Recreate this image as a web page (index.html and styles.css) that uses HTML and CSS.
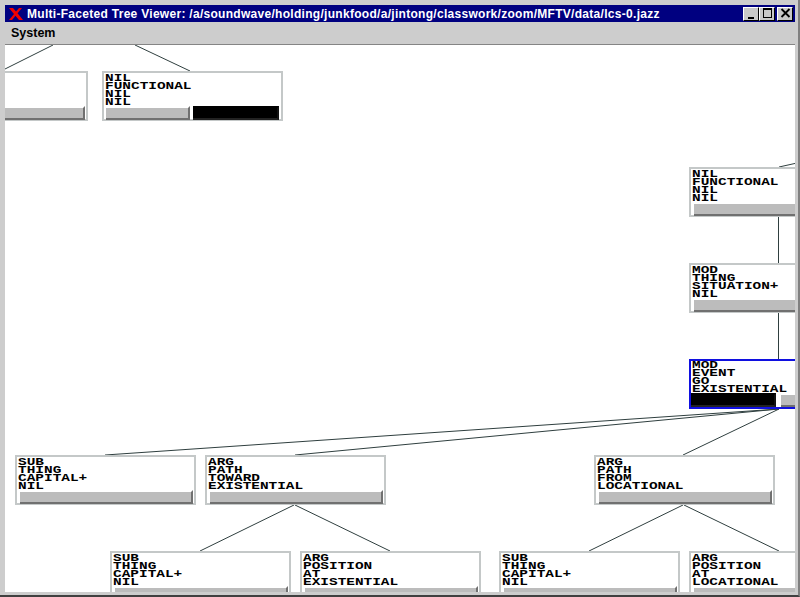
FILE: index.html
```html
<!DOCTYPE html>
<html lang="en">
<head>
  <meta charset="utf-8">
  <title>Multi-Faceted Tree Viewer</title>
  <link rel="stylesheet" href="styles.css">
</head>
<body>
  <div class="window">
    <div class="titlebar">
      <svg class="xlogo" width="14" height="12" viewBox="0 0 14 12">
        <path d="M0 0h4l3 3.500L10 0h3L8.500 5.200 14 12h-4L6.500 7.700 3 12H0l5-6z" fill="#f00000"/>
      </svg>
      <span class="title">Multi-Faceted Tree Viewer: /a/soundwave/holding/junkfood/a/jintong/classwork/zoom/MFTV/data/lcs-0.jazz</span>
      <div class="controls">
        <button class="ctl"><svg width="11" height="11" viewBox="0 0 11 11"><path d="M2 9h6v2H2z"/></svg></button>
        <button class="ctl"><svg width="11" height="11" viewBox="0 0 11 11"><path d="M1 0h9v10H1zM2 2v7h7V2z" fill-rule="evenodd"/></svg></button>
        <button class="ctl ctl-close"><svg width="11" height="11" viewBox="0 0 11 11"><path d="M1.500 1l8 8M9.500 1l-8 8" stroke="#000" stroke-width="1.800" fill="none"/></svg></button>
      </div>
    </div>
    <div class="menubar"><span class="menu-item">System</span></div>
    <div class="canvas">
      <svg class="edges" width="791" height="547" viewBox="5 45 791 547">
        <g stroke="#2f3f3f" stroke-width="1" fill="none">
          <path d="M53 45L5 69"/>
          <path d="M135 45L190 71"/>
          <path d="M797 163L779 167"/>
          <path d="M778.500 217V263"/>
          <path d="M778.500 313V359"/>
          <path d="M779 409L105 455"/>
          <path d="M779 409L295 455"/>
          <path d="M779 409L683 455"/>
          <path d="M294 505L200 551"/>
          <path d="M295 505L390 551"/>
          <path d="M683 505L589 551"/>
          <path d="M684 505L779 551"/>
        </g>
      </svg>

      <div class="node pos-a">
        <div class="bars"><div class="bar"></div></div>
      </div>
      <div class="node pos-b">
        <pre class="label">NIL
FUNCTIONAL
NIL
NIL</pre>
        <div class="bars"><div class="bar"></div><div class="bar bar-on"></div></div>
      </div>
      <div class="node pos-c">
        <pre class="label">NIL
FUNCTIONAL
NIL
NIL</pre>
        <div class="bars"><div class="bar"></div></div>
      </div>
      <div class="node pos-d">
        <pre class="label">MOD
THING
SITUATION+
NIL</pre>
        <div class="bars"><div class="bar"></div></div>
      </div>
      <div class="node node-active pos-e">
        <pre class="label">MOD
EVENT
GO
EXISTENTIAL</pre>
        <div class="bars"><div class="bar bar-on"></div><div class="bar"></div></div>
      </div>
      <div class="node pos-f">
        <pre class="label">SUB
THING
CAPITAL+
NIL</pre>
        <div class="bars"><div class="bar"></div></div>
      </div>
      <div class="node pos-g">
        <pre class="label">ARG
PATH
TOWARD
EXISTENTIAL</pre>
        <div class="bars"><div class="bar"></div></div>
      </div>
      <div class="node pos-h">
        <pre class="label">ARG
PATH
FROM
LOCATIONAL</pre>
        <div class="bars"><div class="bar"></div></div>
      </div>
      <div class="node pos-i">
        <pre class="label">SUB
THING
CAPITAL+
NIL</pre>
        <div class="bars"><div class="bar"></div></div>
      </div>
      <div class="node pos-j">
        <pre class="label">ARG
POSITION
AT
EXISTENTIAL</pre>
        <div class="bars"><div class="bar"></div></div>
      </div>
      <div class="node pos-k">
        <pre class="label">SUB
THING
CAPITAL+
NIL</pre>
        <div class="bars"><div class="bar"></div></div>
      </div>
      <div class="node pos-l">
        <pre class="label">ARG
POSITION
AT
LOCATIONAL</pre>
        <div class="bars"><div class="bar"></div></div>
      </div>
    </div>
  </div>
</body>
</html>
```

FILE: styles.css
```css
html, body {
  margin: 0;
  height: 100%;
  overflow: hidden;
}

.window {
  box-sizing: border-box;
  width: 800px;
  height: 597px;
  display: flex;
  flex-direction: column;
  padding: 3px 2px 3px 3px;
  border-right: 2px solid #808080;
  border-bottom: 2px solid #404040;
  background: #cdcdcd;
}

.titlebar {
  flex: none;
  height: 17px;
  margin: 2px 1px 0 2px;
  display: flex;
  align-items: center;
  background: #000080;
  color: #fff;
}

.xlogo {
  flex: none;
  margin-left: 4px;
}

.title {
  margin-left: 4px;
  font-family: "Liberation Sans", Arial, sans-serif;
  font-size: 12px;
  font-weight: bold;
  letter-spacing: 0.29px;
  white-space: nowrap;
}

.controls {
  margin-left: auto;
  margin-right: 2px;
  display: flex;
}

.ctl {
  box-sizing: border-box;
  width: 16px;
  height: 14px;
  padding: 0;
  display: flex;
  align-items: center;
  justify-content: center;
  background: #c8c8c8;
  border: 1px solid;
  border-color: #fff #000 #000 #fff;
}

.ctl-close {
  margin-left: 2px;
}

.menubar {
  flex: none;
  height: 22px;
  margin: 0 1px 0 2px;
  display: flex;
  align-items: center;
  border-bottom: 1px solid #858585;
}

.menu-item {
  margin-left: 6px;
  font-family: "Liberation Sans", Arial, sans-serif;
  font-size: 12.500px;
  font-weight: bold;
  color: #000;
}

.canvas {
  position: relative;
  flex: 1;
  margin: 0 1px 0 2px;
  overflow: hidden;
  background: #fff;
}

.edges {
  position: absolute;
  left: 0;
  top: 0;
}

.node {
  position: absolute;
  box-sizing: border-box;
  width: 181px;
  height: 50px;
  display: flex;
  flex-direction: column;
  justify-content: flex-end;
  background: #fff;
  border: 2px solid #c4c8c8;
}

.node-active {
  border-color: #1010e0;
}

/* squashed wide courier look of the old X font */
.label {
  flex: none;
  box-sizing: border-box;
  height: 33px;
  margin: 0;
  padding: 1px 0 0 0.8px;
  font-family: "Liberation Mono", "Courier New", monospace;
  font-size: 11px;
  font-weight: bold;
  line-height: 8px;
  color: #000;
  transform: scaleX(1.31);
  transform-origin: left top;
}

.bars {
  flex: none;
  display: flex;
  gap: 3px;
  height: 14px;
  margin-bottom: -1px;
  padding: 0 1px 0 3px;
}

.bar {
  flex: 1;
  box-sizing: border-box;
  background: #bcbcbc;
  border-top: 2px solid #fff;
  border-right: 2px solid #707070;
  border-bottom: 2px solid #707070;
}

.bar-on {
  background: #000;
  border-top-color: #000;
  border-right-color: #111;
  border-bottom-color: #222;
}

.pos-b .bars {
  padding: 0 2px;
}

.pos-b .bar-on {
  flex: none;
  width: 86px;
}

.node-active .label {
  height: 32px;
  padding-top: 0;
}

.node-active .bars {
  gap: 5px;
  margin-bottom: 0;
  padding: 0;
}

.node-active .bar-on {
  flex: none;
  width: 85px;
}

.pos-a { left: -98px; top: 26px; }
.pos-b { left: 97px; top: 26px; }
.pos-c { left: 684px; top: 122px; }
.pos-d { left: 684px; top: 218px; }
.pos-e { left: 684px; top: 314px; }
.pos-f { left: 10px; top: 410px; }
.pos-g { left: 200px; top: 410px; }
.pos-h { left: 589px; top: 410px; }
.pos-i { left: 105px; top: 506px; }
.pos-j { left: 295px; top: 506px; }
.pos-k { left: 494px; top: 506px; }
.pos-l { left: 684px; top: 506px; }
```
